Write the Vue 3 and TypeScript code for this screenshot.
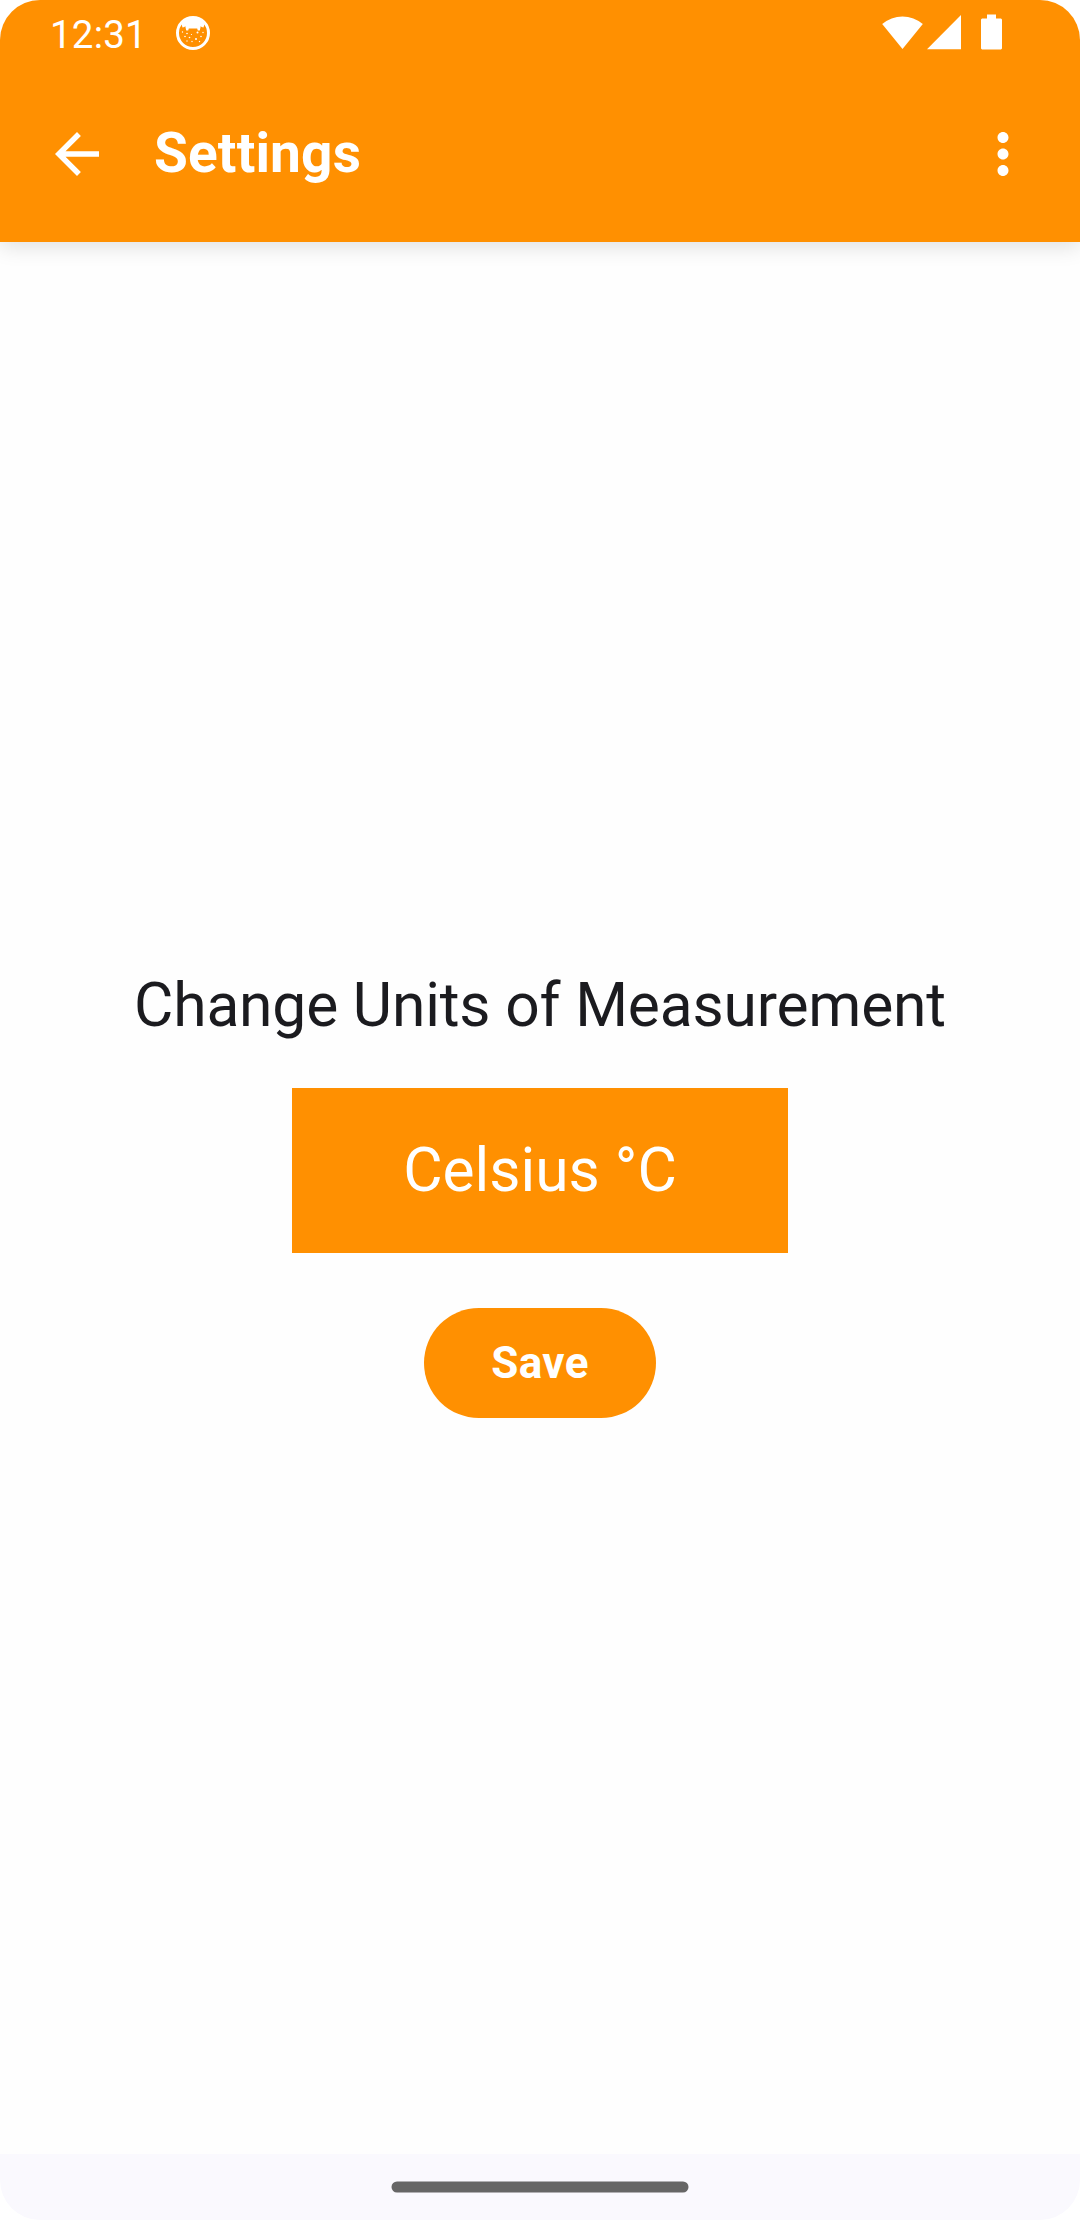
<script setup lang="ts">
import { ref } from 'vue'

const time = ref('12:31')
const title = ref('Settings')
const unit = ref('Celsius °C')
</script>

<template>
  <div class="screen">
    <header class="top">
      <div class="status">
        <span class="clock">{{ time }}</span>
        <svg class="debug" width="36" height="36" viewBox="0 0 36 36">
          <circle cx="18" cy="18" r="15.5" fill="none" stroke="#fff" stroke-width="3" />
          <path
            d="M6.500 9Q11 2 18 2T29.500 9L28.500 12.500L26.500 12L25.800 11L24.800 15.500L22.800 15.500L22.200 13.500H13.800L13.200 15.500L11.200 15.500L10.200 11L9.500 12L7.500 12.500Z"
            fill="#fff"
          />
          <g fill="#fff">
            <circle cx="7.500" cy="17" r=".7" />
            <circle cx="12" cy="18.500" r=".8" />
            <circle cx="22.500" cy="17.500" r="1" />
            <circle cx="28" cy="17.500" r=".7" />
            <circle cx="16.500" cy="19.500" r=".6" />
            <circle cx="10" cy="21.500" r=".8" />
            <circle cx="14.500" cy="22.500" r=".8" />
            <circle cx="21" cy="24" r="1" />
            <circle cx="26" cy="21.500" r=".8" />
            <circle cx="17" cy="26.500" r=".7" />
            <circle cx="12" cy="26" r=".7" />
            <circle cx="24.500" cy="26.500" r=".7" />
          </g>
        </svg>
        <svg class="signals" width="122" height="36" viewBox="0 0 122 36" fill="#fff">
          <path d="M0.200 10A31 31 0 0 1 40.800 10L20.500 35Z" />
          <path d="M45 35.200L79 1V35.200Z" />
          <path d="M105 0.500h9V4.500h5l1 1V34.500l-1 1H100l-1-1V5.500l1-1h5Z" />
        </svg>
      </div>
      <div class="bar">
        <svg width="66" height="66" viewBox="0 0 24 24" fill="#fff">
          <path d="M20 11H7.830l5.590-5.590L12 4l-8 8 8 8 1.410-1.410L7.830 13H20v-2z" />
        </svg>
        <h1 class="title">{{ title }}</h1>
        <svg width="66" height="66" viewBox="0 0 24 24" fill="#fff">
          <path
            d="M12 8c1.100 0 2-.9 2-2s-.9-2-2-2-2 .9-2 2 .9 2 2 2zm0 2c-1.100 0-2 .9-2 2s.9 2 2 2 2-.9 2-2-.9-2-2-2zm0 6c-1.100 0-2 .9-2 2s.9 2 2 2 2-.9 2-2-.9-2-2-2z"
          />
        </svg>
      </div>
    </header>
    <main class="content">
      <p class="label">Change Units of Measurement</p>
      <div class="unit">{{ unit }}</div>
      <button class="save" type="button">Save</button>
    </main>
    <footer class="nav">
      <svg width="298" height="12" viewBox="0 0 298 12">
        <rect x="0.500" y="0.500" width="297" height="11" rx="5.500" fill="#666" />
      </svg>
    </footer>
  </div>
</template>

<style>
body {
  background: #fff;
}
</style>

<style scoped>
.screen {
  width: 1080px;
  height: 2220px;
  display: flex;
  flex-direction: column;
  overflow: hidden;
  border-radius: 40px;
  background: #fefefe;
  font-family: Roboto, sans-serif;
}
.top {
  flex: none;
  height: 242px;
  background: #ff9001;
  color: #fff;
  box-shadow: 0 5px 20px rgba(0, 0, 0, 0.12);
}
.status {
  height: 66px;
  display: flex;
  align-items: flex-start;
  padding: 0 76px 0 50px;
  box-sizing: border-box;
}
.clock {
  width: 125px;
  padding-top: 12px;
  font-size: 38.5px;
  line-height: 45px;
  letter-spacing: 0.2px;
}
.debug {
  margin-top: 15px;
}
.signals {
  margin: 14px 0 0 auto;
}
.bar {
  height: 176px;
  display: flex;
  align-items: center;
  padding: 0 44px;
}
.title {
  flex: 1;
  margin: 0 0 2px 44px;
  font-size: 55px;
  line-height: 66px;
  font-weight: 700;
  letter-spacing: 0.15px;
}
.content {
  flex: 1;
  display: flex;
  flex-direction: column;
  align-items: center;
  padding-top: 725px;
}
.label {
  margin: 0;
  font-size: 60.5px;
  line-height: 77px;
  letter-spacing: -0.18px;
  color: #1b1b1f;
  white-space: nowrap;
}
.unit {
  width: 496px;
  height: 165px;
  margin-top: 44px;
  background: #ff9001;
  color: #fff;
  font-size: 60.5px;
  line-height: 165px;
  text-align: center;
}
.save {
  width: 232px;
  height: 110px;
  margin-top: 55px;
  padding: 0;
  border: 0;
  border-radius: 55px;
  background: #ff9001;
  color: #fff;
  font: 700 44px/110px Roboto, sans-serif;
  letter-spacing: 0.4px;
}
.nav {
  height: 66px;
  display: flex;
  justify-content: center;
  align-items: center;
  background: #faf9fe;
}
</style>
